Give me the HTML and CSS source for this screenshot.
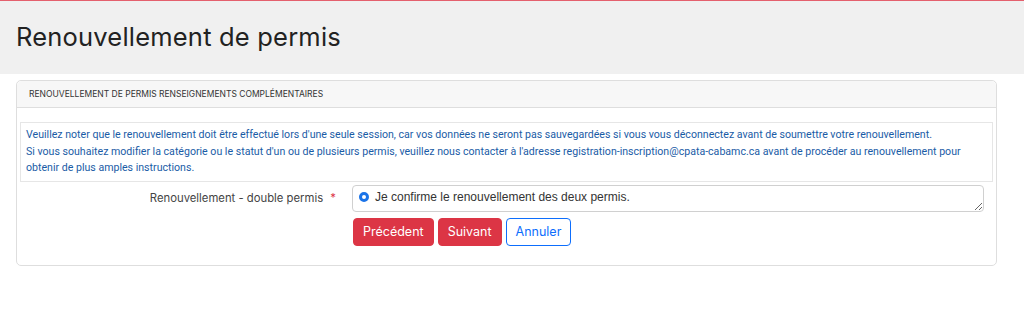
FILE: index.html
```html
<!DOCTYPE html>
<html lang="fr">
<head>
    <meta charset="UTF-8">
    <meta name="viewport" content="width=device-width, initial-scale=1.0">
    <title>Renouvellement de permis</title>
    <link rel="stylesheet" href="styles.css">
</head>
<body>
    <div class="page-header">
        <h1>Renouvellement de permis</h1>
    </div>

    <div class="content">
        <div class="card">
            <div class="card-header">Renouvellement de permis renseignements complémentaires</div>

            <div class="card-body">
                <div class="notice">
                    Veuillez noter que le renouvellement doit être effectué lors d'une seule session, car vos données ne seront pas sauvegardées si vous vous déconnectez avant de soumettre votre renouvellement.<br>
                    Si vous souhaitez modifier la catégorie ou le statut d'un ou de plusieurs permis, veuillez nous contacter à l'adresse registration-inscription@cpata-cabamc.ca avant de procéder au renouvellement pour obtenir de plus amples instructions.
                </div>

                <div class="form-row">
                    <label class="row-label">Renouvellement - double permis <span class="required">*</span></label>
                    <div class="choice-box">
                        <label class="choice">
                            <span class="radio"></span>
                            Je confirme le renouvellement des deux permis.
                        </label>
                    </div>
                </div>

                <div class="btn-row">
                    <button type="button" class="btn btn-red">Précédent</button>
                    <button type="submit" class="btn btn-red">Suivant</button>
                    <button type="button" class="btn btn-outline">Annuler</button>
                </div>
            </div>
        </div>
    </div>
</body>
</html>
```

FILE: styles.css
```css
*{
    margin: 0;
    padding: 0;
    box-sizing: border-box;
}

body{
    background-color: white;
    font-family: "Inter", "Noto Sans", sans-serif;
    color: #333;
}

.page-header{
    height: 74px;
    background-color: #f0f0f0;
    border-top: 1px solid #e4606d;
    padding: 20px 16px 0 16px;
}

.page-header h1{
    font-size: 25.5px;
    font-weight: 400;
    letter-spacing: 0.2px;
    color: #222;
}

.content{
    padding: 6px 27px 0 16px;
}

.card{
    border: 1px solid #dedede;
    border-radius: 5px;
}

.card-header{
    height: 27px;
    display: flex;
    align-items: center;
    padding: 0 12px;
    background-color: #f7f7f7;
    border-bottom: 1px solid #dedede;
    border-radius: 5px 5px 0 0;
    font-size: 8.5px;
    text-transform: uppercase;
    color: #333;
}

.card-body{
    padding: 14px 3px 19px 3px;
}

.notice{
    border: 1px solid #e6e6e6;
    padding: 4px 5px 4px 5px;
    font-family: "Roboto", sans-serif;
    font-size: 10.6px;
    line-height: 16.5px;
    color: #1a5ca6;
}

.form-row{
    display: grid;
    grid-template-columns: 320px 632px;
    column-gap: 12px;
    margin-top: 3px;
}

.row-label{
    text-align: right;
    font-size: 11.3px;
    color: #444;
    padding-top: 6px;
    padding-right: 4px;
}

.required{
    color: #dc3545;
    margin-left: 4px;
}

.choice-box{
    height: 27px;
    border: 1px solid #d0d0d0;
    border-radius: 4px;
    padding: 4px 6px;
    resize: vertical;
    overflow: auto;
}

.choice{
    display: flex;
    align-items: center;
    gap: 6px;
    font-family: "Liberation Sans", Arial, sans-serif;
    font-size: 12px;
    color: #333;
}

.radio{
    width: 10px;
    height: 10px;
    border-radius: 50%;
    border: 3px solid #1a73e8;
    background-color: white;
}

.btn-row{
    display: flex;
    gap: 4px;
    margin-top: 6px;
    padding-left: 333px;
}

.btn{
    height: 28px;
    padding: 0 9px;
    border-radius: 4px;
    font-family: "Inter", "Noto Sans", sans-serif;
    font-size: 12.5px;
    cursor: pointer;
}

.btn-red{
    background-color: #dc3545;
    border: 1px solid #dc3545;
    color: white;
}

.btn-outline{
    background-color: white;
    border: 1px solid #0d6efd;
    color: #0d6efd;
}
```
